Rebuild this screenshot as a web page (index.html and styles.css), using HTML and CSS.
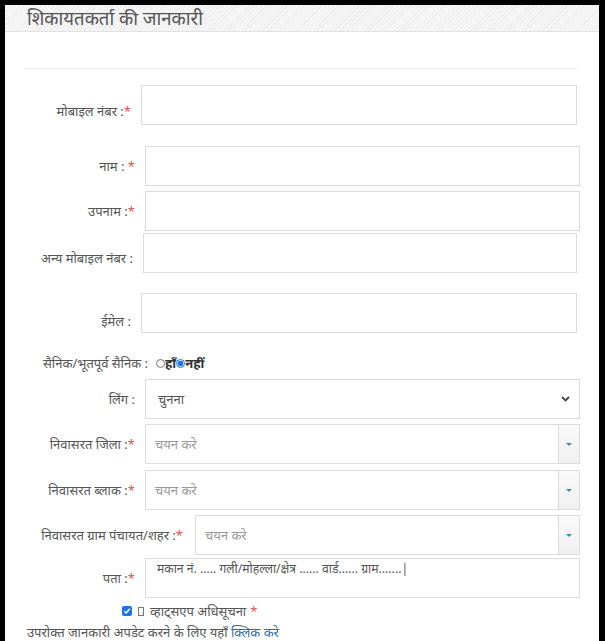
FILE: index.html
```html
<!DOCTYPE html>
<html lang="hi">
<head>
<meta charset="utf-8">
<title>शिकायतकर्ता की जानकारी</title>
<link rel="stylesheet" href="styles.css">
</head>
<body>
<div class="page">
  <div class="panel-head">
    <h3 class="panel-title">शिकायतकर्ता की जानकारी</h3>
  </div>
  <div class="panel-body">
    <hr class="rule">

    <div class="row r-mobile">
      <label class="lbl w131">मोबाइल नंबर :<span class="req">*</span></label>
      <div class="field mr22"><input class="ctl" type="text"></div>
    </div>

    <div class="row r-name">
      <label class="lbl w135">नाम : <span class="req">*</span></label>
      <div class="field mr19"><input class="ctl" type="text"></div>
    </div>

    <div class="row r-surname">
      <label class="lbl w135">उपनाम :<span class="req">*</span></label>
      <div class="field mr19"><input class="ctl" type="text"></div>
    </div>

    <div class="row r-alt">
      <label class="lbl w133">अन्य मोबाइल नंबर :</label>
      <div class="field mr22"><input class="ctl" type="text"></div>
    </div>

    <div class="row r-email">
      <label class="lbl w131">ईमेल :</label>
      <div class="field mr22"><input class="ctl" type="text"></div>
    </div>

    <div class="row r-army">
      <label class="lbl lbl-army">सैनिक/भूतपूर्व सैनिक :</label>
      <div class="radios">
        <span class="radio"></span><b class="opt">हाँ</b><span class="radio on"></span><b class="opt">नहीं</b>
      </div>
    </div>

    <div class="row r-gender">
      <label class="lbl w135">लिंग :</label>
      <div class="field mr19">
        <div class="ctl sel">
          <span class="sel-text">चुनना</span>
          <svg class="chev" width="9" height="6" viewBox="0 0 9 6"><path d="M1 1 L4.5 4.5 L8 1" fill="none" stroke="#444" stroke-width="1.8"/></svg>
        </div>
      </div>
    </div>

    <div class="row r-dist">
      <label class="lbl w135">निवासरत जिला :<span class="req">*</span></label>
      <div class="field mr19">
        <div class="ctl s2">
          <span class="s2-ph">चयन करे</span>
          <span class="s2-arrow"><span class="tri"></span></span>
        </div>
      </div>
    </div>

    <div class="row r-block">
      <label class="lbl w135">निवासरत ब्लाक :<span class="req">*</span></label>
      <div class="field mr19">
        <div class="ctl s2">
          <span class="s2-ph">चयन करे</span>
          <span class="s2-arrow"><span class="tri"></span></span>
        </div>
      </div>
    </div>

    <div class="row r-gp">
      <label class="lbl w185">निवासरत ग्राम पंचायत/शहर :<span class="req">*</span></label>
      <div class="field mr19">
        <div class="ctl s2">
          <span class="s2-ph">चयन करे</span>
          <span class="s2-arrow"><span class="tri"></span></span>
        </div>
      </div>
    </div>

    <div class="row r-addr">
      <label class="lbl w135">पता :<span class="req">*</span></label>
      <div class="field mr19">
        <div class="ctl area">मकान नं. ..... गली/मोहल्ला/क्षेत्र ...... वार्ड...... ग्राम.......|</div>
      </div>
    </div>

    <div class="wa">
      <span class="cb"><svg width="8" height="8" viewBox="0 0 8 8"><path d="M1.3 4.2 L3.2 6 L6.8 1.8" fill="none" stroke="#fff" stroke-width="1.5"/></svg></span>
      <span class="tofu"></span>
      <span class="wa-text">व्हाट्सएप अधिसूचना</span> <span class="req">*</span>
    </div>

    <p class="update">उपरोक्त जानकारी अपडेट करने के लिए यहाँ <a class="link" href="#">क्लिक करे</a></p>
  </div>
</div>
</body>
</html>
```

FILE: styles.css
```css
html, body {
  margin: 0;
  padding: 0;
  background: #000;
}
body {
  font-family: "Noto Sans", "Open Sans", sans-serif;
  font-size: 13px;
  color: #555;
}
.page {
  margin: 5px 6px 0 5px;
  width: 594px;
  height: 636px;
  background: #fff;
}
.panel-head {
  height: 26px;
  background: repeating-linear-gradient(135deg, #f7f7f7 0 2px, #ececec 2px 3px);
  border-bottom: 1px solid #e2e2e2;
  padding-left: 22px;
}
.panel-title {
  margin: 0;
  font-weight: normal;
  font-size: 18.5px;
  line-height: 25px;
  color: #555;
}
.rule {
  margin: 36px 22px 0 20px;
  border: 0;
  border-top: 1px solid #eaeaea;
  height: 0;
}
.row {
  display: flex;
  align-items: center;
}
.lbl {
  flex: none;
  text-align: right;
  color: #555;
  font-size: 13px;
  box-sizing: border-box;
}
.w131 { width: 126px; margin-right: 10px; }
.w133 { width: 128px; margin-right: 10px; }
.w135 { width: 130px; margin-right: 10px; }
.w185 { width: 178px; margin-right: 12px; }
.field {
  flex: 1;
  min-width: 0;
}
.mr22 { margin-right: 22px; }
.mr19 { margin-right: 19px; }
.req { color: #d9534f; }
.ctl {
  display: block;
  box-sizing: border-box;
  width: 100%;
  height: 40px;
  border: 1px solid #dcdcdc;
  background: #fff;
  margin: 0;
  padding: 0 12px;
  font: inherit;
}
.r-mobile { margin-top: 16px; }
.r-mobile .lbl { padding-top: 12px; }
.r-name { margin-top: 21px; }
.r-surname { margin-top: 5px; }
.r-alt { margin-top: 2px; }
.r-alt .lbl { padding-top: 10px; }
.r-email { margin-top: 20px; }
.r-email .lbl { padding-top: 16px; }
.r-army { margin-top: 20px; height: 20px; }
.lbl-army { width: 143px; margin-right: 8px; }
.radios { display: flex; align-items: center; color: #333; }
.radio {
  width: 9px; height: 9px;
  border: 1px solid #767676;
  border-radius: 50%;
  box-sizing: border-box;
  display: inline-block;
}
.radio.on {
  border: 1px solid #1a73e8;
  background: radial-gradient(circle, #1a73e8 0 2.6px, #fff 3.1px);
}
.opt { font-weight: bold; font-size: 13px; color: #333; }
.r-gender { margin-top: 6px; }
.sel {
  display: flex;
  align-items: center;
  justify-content: space-between;
  color: #555;
}
.chev { margin-right: -3px; }
.r-dist { margin-top: 5px; }
.r-block { margin-top: 6px; }
.r-gp { margin-top: 5px; }
.s2 {
  display: flex;
  align-items: center;
  padding: 0 0 0 9px;
}
.s2-ph { flex: 1; color: #999; }
.s2-arrow {
  width: 20px;
  height: 100%;
  border-left: 1px solid #dcdcdc;
  background: linear-gradient(#fafafa, #f0f0f0);
  display: flex;
  align-items: center;
  justify-content: center;
}
.tri {
  width: 0; height: 0;
  border-left: 3px solid transparent;
  border-right: 3px solid transparent;
  border-top: 3px solid #3b8bb5;
}
.r-addr { margin-top: 3px; }
.area {
  padding: 1px 11px;
  line-height: 18px;
  color: #555;
  font-size: 12.2px;
}
.wa {
  margin: 5px 0 0 117px;
  display: flex;
  align-items: center;
  gap: 4px;
  height: 16px;
}
.cb {
  width: 10px; height: 10px;
  border-radius: 2px;
  background: #1a73e8;
  display: inline-flex;
  align-items: center;
  justify-content: center;
}
.tofu {
  width: 6px; height: 9px;
  border: 1px solid #777;
  box-sizing: border-box;
  margin: 0 2px;
}
.wa-text { color: #555; }
.update {
  margin: 4px 0 0 22px;
  color: #555;
  font-size: 13px;
}
.link { color: #2f6ea5; text-decoration: none; }
```
